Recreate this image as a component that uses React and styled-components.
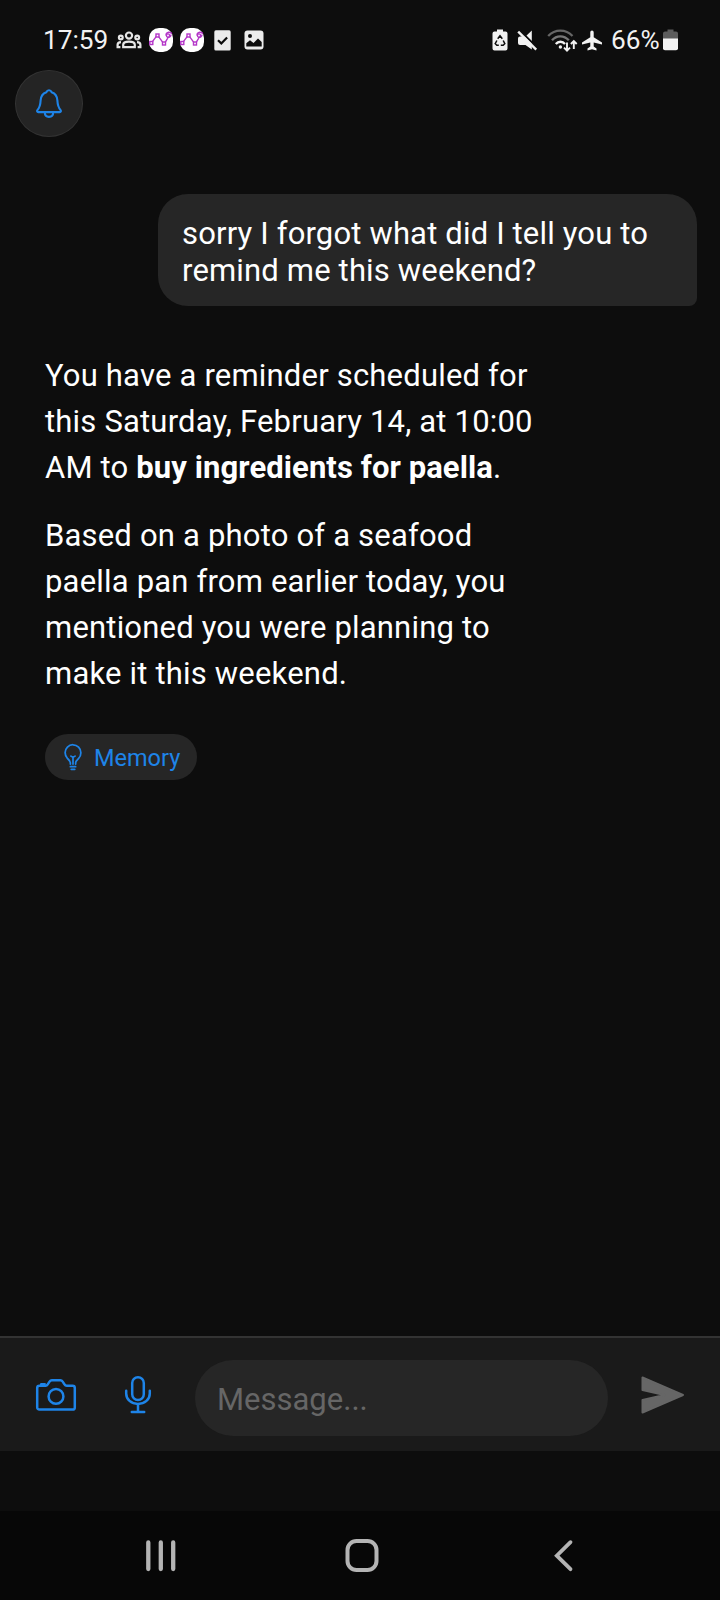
import React from 'react';
import styled, { createGlobalStyle } from 'styled-components';
import { IoBulbOutline } from 'react-icons/io5';

const reply = [
  [{ text: 'You have a reminder scheduled for' }],
  [{ text: 'this Saturday, February 14, at 10:00' }],
  [{ text: 'AM to ' }, { text: 'buy ingredients for paella', bold: true }, { text: '.' }],
];

const details = [
  'Based on a photo of a seafood',
  'paella pan from earlier today, you',
  'mentioned you were planning to',
  'make it this weekend.',
];

function PeopleIcon() {
  return (
    <svg width="26" height="18" viewBox="0 0 26 18" fill="none" stroke="#e6e6e6" strokeWidth="2.2">
      <circle cx="13" cy="4.6" r="3.1" />
      <circle cx="4.8" cy="6.5" r="1.9" />
      <circle cx="21.2" cy="6.5" r="1.9" />
      <path d="M7.2 16.1v-2.3c0-2.2 2.8-3.1 5.8-3.1s5.8.9 5.8 3.1v2.3z" />
      <path d="M5 11.2c-2 .1-3.4 1-3.4 2.6v2.3h2.8M21 11.2c2 .1 3.4 1 3.4 2.6v2.3h-2.8" />
    </svg>
  );
}

function GraphIcon() {
  return (
    <svg width="24" height="24" viewBox="0 0 24 24" fill="none">
      <rect width="24" height="24" rx="10" fill="#fff" />
      <g stroke="#b436c8" strokeWidth="1.4">
        <path d="M3 14.2l4.4-5.8M9.4 8.4l4.6 6.2M16 14.6l4-6.400M17 7.500c0-4 5.500-4 5.500-1.500M18 9.500c3 0 4-1.500 4-3" />
        <rect x=".8" y="13.500" width="3" height="3" fill="#fff" />
        <rect x="7" y="6" width="3" height="3" fill="#fff" />
        <rect x="13.500" y="14" width="3" height="3" fill="#fff" />
        <circle cx="19" cy="7.500" r="1.6" fill="#fff" />
      </g>
    </svg>
  );
}

function TaskIcon() {
  return (
    <svg width="17" height="21" viewBox="0 0 17 21">
      <rect x=".3" y=".3" width="16.4" height="20.2" rx="1.600" fill="#ececec" />
      <path d="M4 10.3l3.3 3.1 5.8-6" fill="none" stroke="#0d0d0d" strokeWidth="2.2" />
    </svg>
  );
}

function PhotoIcon() {
  return (
    <svg width="20" height="20" viewBox="0 0 20 20">
      <rect x=".5" y=".5" width="19" height="19" rx="3" fill="#ececec" />
      <circle cx="6" cy="6" r="2" fill="#0d0d0d" />
      <path d="M2.300 16.500v-3.300l3.700-3 3.500 2.800 4.500-4.500 3.700 3.500v4.500z" fill="#0d0d0d" />
    </svg>
  );
}

function BatterySaverIcon() {
  return (
    <svg width="16" height="22" viewBox="0 0 16 22">
      <path d="M5 .5h6v2h2.500a2 2 0 0 1 2 2v15a2 2 0 0 1-2 2h-11a2 2 0 0 1-2-2v-15a2 2 0 0 1 2-2H5z" fill="#f2f2f2" />
      <path
        d="M5.700 9.800L8 6.800l2.300 3M11.200 11.500l1.600 3.200-1.600 1.500H8.800M6.800 16.200h-2l-1.600-1.500 1.700-3.200"
        fill="none"
        stroke="#0d0d0d"
        strokeWidth="1.500"
      />
    </svg>
  );
}

function MuteIcon() {
  return (
    <svg width="21" height="21" viewBox="0 0 21 21">
      <path d="M14.800.5v19L8.500 15H3a2 2 0 0 1-2-2V8.500a2 2 0 0 1 2-2h5.500z" fill="#f2f2f2" />
      <path d="M2.500 0L21 18.500" stroke="#0d0d0d" strokeWidth="2" />
      <path d="M1.200 1.700l18 18" stroke="#f2f2f2" strokeWidth="2.400" />
    </svg>
  );
}

function WifiIcon() {
  return (
    <svg width="31" height="23" viewBox="0 0 31 23" fill="none" strokeWidth="2.3">
      <path d="M1.200 7C8-.3 18.800-.3 25.500 7" stroke="#666" />
      <path d="M5 11.200C9.500 6 17 6 21.800 11.200" stroke="#777" />
      <path d="M8.800 15c2.500-3 6.800-3 9.200 0" stroke="#f2f2f2" />
      <circle cx="13.400" cy="18" r="1.700" fill="#f2f2f2" />
      <path d="M20 13.500v8M17 18.600l3 3 3-3M26.800 20v-8M23.900 15l2.900-3 2.900 3" stroke="#f2f2f2" strokeWidth="1.900" />
    </svg>
  );
}

function PlaneIcon() {
  return (
    <svg width="22" height="21" viewBox="0 0 22 21">
      <path
        d="M11 .5c1 0 1.700.9 1.700 2v4.700l8.300 5.200v2.200l-8.300-2.200v4l2.800 2.200v1.900L11 19.200l-4.500 1.300v-1.900l2.800-2.200v-4L1 14.600v-2.200l8.300-5.200V2.500c0-1.100.7-2 1.700-2z"
        fill="#f2f2f2"
      />
    </svg>
  );
}

function BatteryIcon() {
  return (
    <svg width="15" height="22" viewBox="0 0 15 22">
      <path d="M4.500.5h6v2H13a2 2 0 0 1 2 2V10H0V4.500a2 2 0 0 1 2-2h2.500z" fill="#5c5c5c" />
      <path d="M0 9.500h15v9.800a2 2 0 0 1-2 2H2a2 2 0 0 1-2-2z" fill="#f2f2f2" />
    </svg>
  );
}

function BellIcon() {
  return (
    <svg width="28" height="32" viewBox="0 0 28 32" fill="none" stroke="currentColor" strokeWidth="2.1" strokeLinejoin="round">
      <path d="M14 2.200c-1.500 0-2.200.9-2.600 2C7.500 5.500 5.800 8.500 5.600 12.500c-.2 5-.9 7-3.200 9.600-.7.900-.3 2 .9 2h21.400c1.200 0 1.600-1.100.9-2-2.300-2.600-3-4.600-3.200-9.600-.2-4-1.900-7-5.800-8.300-.4-1.100-1.100-2-2.600-2z" />
      <path d="M9.800 24.300c0 2.800 1.800 4.600 4.200 4.600s4.200-1.800 4.200-4.600" />
    </svg>
  );
}

function CameraIcon() {
  return (
    <svg width="42" height="36" viewBox="0 0 42 36" fill="none" stroke="currentColor" strokeWidth="2.5" strokeLinejoin="round">
      <path d="M4.400 8.700h6.100c1 0 1.700-.5 2.200-1.300l2-3c.5-.8 1.200-1.200 2.100-1.200h8.600c.9 0 1.600.4 2.100 1.200l2 3c.5.8 1.200 1.300 2.200 1.300h5.900c1.300 0 2.200.9 2.200 2.200v19.500c0 1.300-.9 2.200-2.200 2.200H4.400c-1.300 0-2.200-.9-2.200-2.200V10.900c0-1.300.9-2.200 2.200-2.200z" />
      <circle cx="21" cy="19.400" r="7.400" />
      <path d="M6.200 8.300V7.200h4.500" />
    </svg>
  );
}

function MicIcon() {
  return (
    <svg width="28" height="40" viewBox="0 0 28 40" fill="none" stroke="currentColor" strokeWidth="2.5" strokeLinecap="round">
      <rect x="8.200" y="2.200" width="11.600" height="22.800" rx="5.800" />
      <path d="M2.200 15.800v2.600c0 6 5 10.500 11.800 10.500s11.800-4.500 11.800-10.500v-2.600" />
      <path d="M14 29.200v7.900M7.800 37.100h12.400" />
    </svg>
  );
}

function SendIcon() {
  return (
    <svg width="44" height="38" viewBox="0 0 44 38">
      <path
        d="M1.500 1.500v12.600l22 4.900-22 4.900v12.600L42 19z"
        fill="currentColor"
        stroke="currentColor"
        strokeWidth="2"
        strokeLinejoin="round"
      />
    </svg>
  );
}

function App() {
  return (
    <Screen>
      <GlobalStyle />
      <StatusBar>
        <StatusText $width={65}>17:59</StatusText>
        <LeftIcons>
          <PeopleIcon />
          <GraphIcon />
          <GraphIcon />
          <TaskIcon />
          <PhotoIcon />
        </LeftIcons>
        <RightIcons>
          <BatterySaverIcon />
          <MuteIcon />
          <WifiIcon />
          <PlaneIcon />
        </RightIcons>
        <StatusText $width={52}>66%</StatusText>
        <BatteryIcon />
      </StatusBar>

      <Header>
        <BellButton>
          <BellIcon />
        </BellButton>
      </Header>

      <Chat>
        <UserBubble>
          sorry I forgot what did I tell you to
          <br />
          remind me this weekend?
        </UserBubble>
        <Reply>
          <Paragraph>
            {reply.map((line, i) => (
              <Line key={i}>
                {line.map((part) => (part.bold ? <b key={part.text}>{part.text}</b> : part.text))}
              </Line>
            ))}
          </Paragraph>
          <Paragraph>
            {details.map((line) => (
              <Line key={line}>{line}</Line>
            ))}
          </Paragraph>
          <Chip>
            <IoBulbOutline size={28} />
            <ChipLabel>Memory</ChipLabel>
          </Chip>
        </Reply>
      </Chat>

      <Composer>
        <IconButton>
          <CameraIcon />
        </IconButton>
        <IconButton>
          <MicIcon />
        </IconButton>
        <MessageField>Message...</MessageField>
        <SendButton>
          <SendIcon />
        </SendButton>
      </Composer>

      <NavBar>
        <svg width="32" height="34" viewBox="0 0 32 34" stroke="#b4b4b4" strokeWidth="4.3" strokeLinecap="round">
          <path d="M3.300 3.500v26.500M15.800 3.500v26.500M28.200 3.500v26.500" />
        </svg>
        <HomeIcon width="34" height="34" viewBox="0 0 34 34" fill="none" stroke="#b4b4b4" strokeWidth="4">
          <rect x="2.500" y="2" width="29" height="29" rx="9" />
        </HomeIcon>
        <svg width="20" height="34" viewBox="0 0 20 34" fill="none" stroke="#b4b4b4" strokeWidth="3.8" strokeLinecap="round">
          <path d="M16.500 3.200L2.800 16.700l13.700 13.500" />
        </svg>
      </NavBar>
    </Screen>
  );
}

const GlobalStyle = createGlobalStyle`
  body {
    margin: 0;
    background: #0d0d0d;
  }
  * {
    box-sizing: border-box;
  }
  svg {
    display: block;
    flex-shrink: 0;
  }
`;

const Screen = styled.div`
  width: 720px;
  height: 1600px;
  display: flex;
  flex-direction: column;
  overflow: hidden;
  background: #0d0d0d;
  color: #fff;
  font-family: Roboto, 'Liberation Sans', sans-serif;
`;

const StatusBar = styled.div`
  height: 70px;
  padding: 10px 42px 0 43px;
  display: flex;
  align-items: center;
`;

const StatusText = styled.span`
  width: ${(props) => props.$width}px;
  font-size: 26.2px;
  line-height: 30px;
  color: #f2f2f2;
  white-space: nowrap;
`;

const LeftIcons = styled.div`
  display: flex;
  align-items: center;
  margin-left: 8px;
  gap: 7px;

  svg:nth-child(4) {
    margin-left: 3px;
  }
  svg:nth-child(5) {
    margin-left: 6px;
  }
`;

const RightIcons = styled.div`
  display: flex;
  align-items: center;
  gap: 9px;
  margin-left: auto;
  margin-right: 8px;

  svg:last-child {
    margin-left: -6px;
  }
`;

const Header = styled.div`
  height: 124px;
  padding-left: 15px;
`;

const BellButton = styled.div`
  width: 68px;
  height: 67px;
  border: 1.5px solid #333;
  border-radius: 50%;
  background: #242424;
  color: #1e84e8;
  display: flex;
  align-items: center;
  justify-content: center;
`;

const Chat = styled.div`
  height: 1142px;
  padding: 0 23px 0 45px;
  display: flex;
  flex-direction: column;
`;

const UserBubble = styled.div`
  align-self: flex-end;
  width: 539px;
  height: 112px;
  padding: 22px 24px;
  border-radius: 30px 30px 8px 30px;
  background: #262626;
  font-size: 31px;
  letter-spacing: 0.16px;
  line-height: 36.5px;
  white-space: nowrap;
`;

const Reply = styled.div`
  margin-top: 47px;
`;

const Paragraph = styled.p`
  margin: 0 0 22px;
  font-size: 31px;
  letter-spacing: 0.19px;
  line-height: 46px;

  b {
    letter-spacing: 0.08px;
  }
`;

const Line = styled.span`
  display: block;
  white-space: nowrap;
`;

const Chip = styled.div`
  width: 152px;
  height: 46px;
  margin-top: 37px;
  padding-left: 14px;
  border-radius: 23px;
  background: #262626;
  color: #1e84e8;
  display: flex;
  align-items: center;
  gap: 7px;
`;

const ChipLabel = styled.span`
  padding-top: 2px;
  font-size: 23.5px;
`;

const Composer = styled.div`
  height: 115px;
  border-top: 2px solid #333;
  background: #1a1a1a;
  display: flex;
  align-items: center;
  padding: 0 28px;
  gap: 26px;
`;

const IconButton = styled.div`
  width: 56px;
  display: flex;
  justify-content: center;
  color: #1e84e8;
`;

const MessageField = styled.div`
  width: 413px;
  height: 76px;
  margin: 7px 0 0 3px;
  padding: 3px 0 0 22px;
  border-radius: 38px;
  background: #262626;
  color: #666;
  display: flex;
  align-items: center;
  font-size: 31px;
`;

const SendButton = styled.div`
  margin-left: 7px;
  color: #666;
`;

const NavBar = styled.div`
  height: 89px;
  margin-top: 60px;
  padding: 0 146px 0 145px;
  background: #070707;
  display: flex;
  align-items: center;
  justify-content: space-between;
`;

const HomeIcon = styled.svg`
  margin-right: 8px;
`;

export default App;
